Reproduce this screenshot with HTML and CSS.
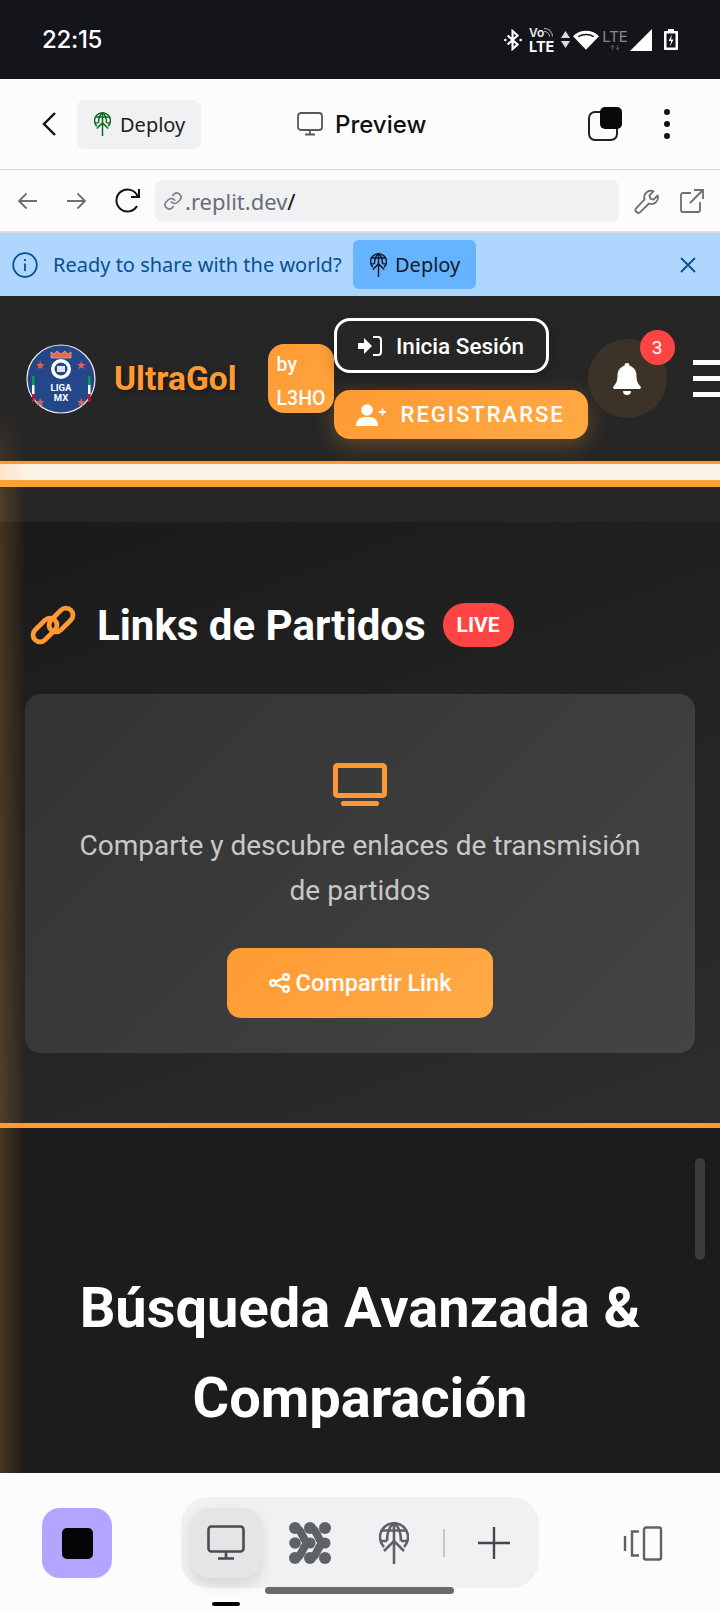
FILE: index.html
```html
<!DOCTYPE html>
<html lang="en">
<head>
    <meta charset="UTF-8">
    <meta name="viewport" content="width=device-width, initial-scale=1.0">
    <title>UltraGol Preview</title>
    <link rel="stylesheet" href="styles.css">
</head>
<body>
    <svg class="defs" width="0" height="0">
        <symbol id="globe-up" viewBox="0 0 30 42" fill="none" stroke="currentColor" stroke-width="2.600">
            <path d="M5 25A14 14 0 1 1 25 25"/>
            <path d="M3 8.500H27M1.500 19H8M22 19H28.500"/>
            <path d="M15 1C9.500 5 8 11 8 19M15 1c5.500 4 7 10 7 18M15 1V19"/>
            <path d="M15 42V20M5 29l10-10 10 10"/>
        </symbol>
    </svg>

    <div class="status-bar">
        <span class="clock">22:15</span>
        <div class="status-icons">
            <svg width="18" height="22" viewBox="0 0 20 24" fill="none" stroke="#fff" stroke-width="2.400"><path d="M4 7l11 10-5.500 5V2L15 7 4 17"/><circle cx="1.500" cy="12" r="1.500" fill="#fff" stroke="none"/><circle cx="18.500" cy="12" r="1.500" fill="#fff" stroke="none"/></svg>
            <div class="volte"><span class="vo">Vo<svg width="10" height="10" viewBox="0 0 10 10" fill="none" stroke="#bbb" stroke-width="1"><path d="M0 1.500a8 8 0 0 1 8.500 8M0 4.500a5 5 0 0 1 5.500 5"/></svg></span><span class="lte">LTE</span></div>
            <svg class="arrows" width="9" height="18" viewBox="0 0 9 18" fill="#ddd"><path d="M4.500 0 9 7H0zM0 10h9l-4.500 7z"/></svg>
            <svg class="wifi" width="26" height="20" viewBox="0 0 27 20" fill="#fff"><path d="M13.500 20 0 6C7.500-1.500 19.500-1.500 27 6z"/><path d="M5.500 6.500C10 3.500 17 3.500 21.500 6.500" fill="none" stroke="#14151a" stroke-width="1.600"/></svg>
            <div class="lte-dim"><span>LTE</span><i>↑↓</i></div>
            <svg width="22" height="22" viewBox="0 0 22 22" fill="#fff"><path d="M22 0v22H0z"/></svg>
            <svg class="battery" width="14" height="21" viewBox="0 0 14 21"><path d="M4 0h6v2h3a1 1 0 0 1 1 1v17a1 1 0 0 1-1 1H1a1 1 0 0 1-1-1V3a1 1 0 0 1 1-1h3z" fill="#fff"/><path d="M2.500 4.500h9v14h-9z" fill="#14151a"/><path d="M8 5.500 4.500 12H7l-1 5.500L9.500 10.500H7z" fill="#fff"/></svg>
        </div>
    </div>

    <div class="toolbar">
        <svg class="back" width="16" height="26" viewBox="0 0 16 26" fill="none" stroke="#111" stroke-width="2.400"><path d="M14 2 3 13l11 11"/></svg>
        <div class="chip"><svg class="chip-icon" width="17" height="24"><use href="#globe-up"/></svg>Deploy</div>
        <div class="title">
            <svg width="26" height="24" viewBox="0 0 26 24" fill="none" stroke="#55585e" stroke-width="1.800"><rect x="1" y="1" width="24" height="17" rx="3"/><path d="M13 18v4M8 22.500h10"/></svg>
            <span>Preview</span>
        </div>
        <svg class="tabs" width="36" height="36" viewBox="0 0 36 36"><rect x="2" y="6" width="28" height="28" rx="6" fill="none" stroke="#222" stroke-width="2"/><rect x="13" y="1" width="22" height="22" rx="5" fill="#0a0a0c"/></svg>
        <svg class="kebab" width="8" height="32" viewBox="0 0 8 32" fill="#111"><circle cx="4" cy="4" r="3"/><circle cx="4" cy="16" r="3"/><circle cx="4" cy="28" r="3"/></svg>
    </div>

    <div class="addressbar">
        <svg width="22" height="18" viewBox="0 0 22 18" fill="none" stroke="#6b6f76" stroke-width="1.800"><path d="M20 9H2M9.500 1.500 2 9l7.500 7.500"/></svg>
        <svg class="forward" width="22" height="18" viewBox="0 0 22 18" fill="none" stroke="#6b6f76" stroke-width="1.800"><path d="M2 9h18M12.500 1.500 20 9l-7.500 7.500"/></svg>
        <svg class="reload" width="28" height="26" viewBox="0 0 28 26" fill="none" stroke="#111" stroke-width="2"><path d="M23 18a11 11 0 1 1 .5-10"/><path d="M25 1v8h-8"/></svg>
        <div class="url">
            <svg width="20" height="20" viewBox="0 0 24 24" fill="none" stroke="#7a7e85" stroke-width="2" stroke-linecap="round"><path d="M10 13a5 5 0 0 0 7.500.5l3-3a5 5 0 0 0-7-7l-1.700 1.700"/><path d="M14 11a5 5 0 0 0-7.500-.5l-3 3a5 5 0 0 0 7 7l1.700-1.700"/></svg>
            <span>.replit.dev<b>/</b></span>
        </div>
        <svg class="wrench" width="26" height="26" viewBox="0 0 24 24" fill="none" stroke="#6b6f76" stroke-width="1.700" stroke-linejoin="round"><path d="M15 2.500a6 6 0 0 1 3 .6l-3.800 3.800.9 2.900 2.900.9 3.800-3.800a6 6 0 0 1-8 7.400L6 22a2.500 2.500 0 0 1-3.900-3.500l7.700-8A6 6 0 0 1 15 2.500z"/></svg>
        <svg class="external" width="24" height="24" viewBox="0 0 24 24" fill="none" stroke="#6b6f76" stroke-width="1.800"><path d="M11 4H3a2 2 0 0 0-2 2v15a2 2 0 0 0 2 2h15a2 2 0 0 0 2-2v-8"/><path d="M10 14 23 1M14 1h9v9"/></svg>
    </div>

    <div class="banner">
        <svg width="26" height="26" viewBox="0 0 26 26" fill="none" stroke="#0a4f92" stroke-width="1.800"><circle cx="13" cy="13" r="11.800"/><path d="M13 11.500V19M13 7v2"/></svg>
        <span class="banner-text">Ready to share with the world?</span>
        <div class="banner-deploy"><svg width="17" height="24"><use href="#globe-up"/></svg>Deploy</div>
        <svg class="banner-close" width="18" height="18" viewBox="0 0 18 18" fill="none" stroke="#0a4f92" stroke-width="1.800"><path d="M2 2l14 14M16 2 2 16"/></svg>
    </div>

    <div class="webview">
        <header class="site-header">
            <svg class="logo" width="70" height="70" viewBox="0 0 70 70">
                <circle cx="35" cy="35" r="34" fill="#24478a" stroke="#eee" stroke-width="1.200"/>
                <path d="M25 14V8l3 2 3-3 4 3 4-3 3 3 3-2v6z" fill="#e9694d" stroke="#f3b7a5" stroke-width=".6"/>
                <circle cx="35" cy="25" r="10" fill="#fff"/>
                <circle cx="35" cy="25" r="6.500" fill="#24478a"/>
                <rect x="31" y="22" width="8" height="6" fill="#dfe6f3"/>
                <g fill="#e9604a" font-family="Liberation Sans" font-size="11">
                    <text x="14" y="25" text-anchor="middle">★</text>
                    <text x="55" y="25" text-anchor="middle">★</text>
                    <text x="14" y="62" text-anchor="middle">★</text>
                    <text x="55" y="62" text-anchor="middle">★</text>
                </g>
                <rect x="6" y="32" width="2.500" height="9" fill="#0a9a4a"/><rect x="6" y="41" width="2.500" height="9" fill="#fff"/><rect x="6" y="50" width="2.500" height="8" fill="#c8102e"/>
                <rect x="62" y="32" width="2.500" height="9" fill="#0a9a4a"/><rect x="62" y="41" width="2.500" height="9" fill="#fff"/><rect x="62" y="50" width="2.500" height="8" fill="#c8102e"/>
                <text x="35" y="47" class="logo-text" text-anchor="middle">LIGA</text>
                <text x="35" y="57" class="logo-text" text-anchor="middle">MX</text>
            </svg>
            <span class="brand">UltraGol</span>
            <span class="by-badge">by L3HO</span>
            <div class="auth">
                <a class="btn-login">
                    <svg width="24" height="20" viewBox="0 0 24 20" fill="#fff"><path d="M0 7h6V2l8 8-8 8v-5H0z"/><path d="M15 1h5a3 3 0 0 1 3 3v12a3 3 0 0 1-3 3h-5" fill="none" stroke="#fff" stroke-width="2"/></svg>
                    Inicia Sesión
                </a>
                <a class="btn-register">
                    <svg width="30" height="22" viewBox="0 0 30 22" fill="#fff"><circle cx="11" cy="6" r="5.800"/><path d="M0 22c0-6 4-9 8-9h6c4 0 8 3 8 9z"/><path d="M23 8h7M26.500 4.500v7" stroke="#fff" stroke-width="1.800"/></svg>
                    REGISTRARSE
                </a>
            </div>
            <div class="bell">
                <svg width="28" height="32" viewBox="0 0 28 32" fill="#fff"><path d="M14 0a2.500 2.500 0 0 1 2.500 2.800C21 4 23.500 8 23.500 12.500c0 6 1.500 8 4 11a1.500 1.500 0 0 1-1 2.500h-25a1.500 1.500 0 0 1-1-2.500c2.500-3 4-5 4-11C4.500 8 7 4 11.500 2.800A2.500 2.500 0 0 1 14 0z"/><path d="M10 28h8a4 4 0 0 1-8 0z"/></svg>
                <span class="bell-count">3</span>
            </div>
            <div class="burger"><i></i><i></i><i></i></div>
        </header>
        <div class="stripe"></div>
        <div class="strip-gap"></div>

        <section class="links">
            <div class="section-title">
                <svg width="50" height="40" viewBox="0 0 50 40" fill="none" stroke="#ff9a33" stroke-width="4.800"><rect x="3" y="18" width="28" height="14" rx="7" transform="rotate(-45 17 25)"/><rect x="19" y="8" width="28" height="14" rx="7" transform="rotate(-45 33 15)"/></svg>
                <h2>Links de Partidos</h2>
                <span class="live">LIVE</span>
            </div>
            <div class="card">
                <svg width="54" height="43" viewBox="0 0 54 43" fill="none"><rect x="2.500" y="2.500" width="49" height="30" rx="2" stroke="#ff9a33" stroke-width="5"/><rect x="8" y="38" width="38" height="5" rx="2.500" fill="#ff9a33"/></svg>
                <p>Comparte y descubre enlaces de transmisión de partidos</p>
                <a class="btn-share">
                    <svg width="21" height="20" viewBox="0 0 21 20" fill="none" stroke="#fff" stroke-width="2.400"><circle cx="4" cy="10" r="2.800"/><circle cx="17" cy="4" r="2.800"/><circle cx="17" cy="16" r="2.800"/><path d="M6.500 8.800 14.500 5M6.500 11.200l8 3.800"/></svg>
                    Compartir Link
                </a>
            </div>
        </section>

        <section class="search">
            <h2>Búsqueda Avanzada &amp; Comparación</h2>
        </section>

        <!-- overlays on the page -->
        <div class="side-glow"></div>
        <div class="scrollbar"></div>
    </div>

    <nav class="bottom-bar">
        <div class="stop"><i></i></div>
        <div class="pill">
            <div class="pill-tab active">
                <svg width="38" height="35" viewBox="0 0 38 35" fill="none" stroke="#4a4c52" stroke-width="2.600"><rect x="1.500" y="1.500" width="35" height="25" rx="3"/><path d="M19 27v6M11 33.500h16"/></svg>
            </div>
            <div class="pill-tab">
                <svg width="42" height="42" viewBox="0 0 42 42" fill="#5f6168">
                    <circle cx="36" cy="6" r="6"/><circle cx="6" cy="21" r="5.800"/><circle cx="36" cy="36" r="6"/>
                    <circle cx="6" cy="6" r="6"/><circle cx="6" cy="36" r="6"/><circle cx="21" cy="6" r="6"/><circle cx="21" cy="36" r="6"/><circle cx="21" cy="21" r="5.500"/><circle cx="36" cy="21" r="5.500"/>
                    <path d="M6 6C14 6 13 21 21 21 13 21 14 36 6 36M21 6C29 6 28 21 36 21 28 21 29 36 21 36" fill="none" stroke="#5f6168" stroke-width="8"/>
                </svg>
            </div>
            <div class="pill-tab">
                <svg width="30" height="42" color="#5f6168"><use href="#globe-up"/></svg>
            </div>
            <span class="pill-sep"></span>
            <svg class="pill-plus" width="32" height="32" viewBox="0 0 32 32" stroke="#44464c" stroke-width="2.400"><path d="M0 16h32M16 0v32"/></svg>
        </div>
        <svg class="devices" width="40" height="35" viewBox="0 0 40 35" fill="none" stroke="#5f6168" stroke-width="2.400"><rect x="21" y="1.500" width="17" height="32" rx="2"/><path d="M16 5.500H9v24h7M2 10v15"/></svg>
        <span class="home-bar"></span>
        <span class="tab-dash"></span>
    </nav>
</body>
</html>
```

FILE: styles.css
```css
* {
    box-sizing: border-box;
}
html, body {
    margin: 0;
    padding: 0;
}
body {
    width: 720px;
    height: 1612px;
    overflow: hidden;
    display: flex;
    flex-direction: column;
    background-color: #fcfcfc;
    font-family: "Noto Sans", sans-serif;
}
.defs {
    position: absolute;
}

/* phone status bar */
.status-bar {
    height: 79px;
    flex-shrink: 0;
    display: flex;
    align-items: center;
    justify-content: space-between;
    padding: 0 42px 0 42px;
    background-color: #14151a;
    color: #fff;
}
.clock {
    font-family: Inter, sans-serif;
    font-size: 24px;
    font-weight: 500;
    letter-spacing: -0.3px;
}
.status-icons {
    display: flex;
    align-items: center;
    gap: 4px;
}
.volte {
    width: 27px;
    display: flex;
    flex-direction: column;
    font-family: Inter, sans-serif;
    font-weight: 700;
    line-height: 14px;
    margin-left: 3px;
}
.vo {
    font-size: 12px;
    font-weight: 600;
    color: #eee;
    white-space: nowrap;
}
.lte {
    font-size: 14.500px;
}
.arrows {
    margin-left: 1px;
}
.wifi {
    margin-left: -1px;
}
.lte-dim {
    width: 22px;
    display: flex;
    flex-direction: column;
    align-items: center;
    font-family: Inter, sans-serif;
    color: #8a8b90;
    line-height: 15px;
    font-size: 15px;
    margin-left: 1px;
}
.lte-dim i {
    font-size: 6px;
    line-height: 7px;
    font-style: normal;
}
.battery {
    margin-left: 8px;
}

/* replit toolbar */
.toolbar {
    height: 91px;
    flex-shrink: 0;
    display: flex;
    align-items: center;
    padding-left: 41px;
    background-color: #fcfcfc;
    border-bottom: 1px solid #d8d8da;
}
.chip {
    width: 124px;
    height: 49px;
    margin-left: 20px;
    display: flex;
    align-items: center;
    gap: 9px;
    padding-left: 17px;
    background-color: #f0f1f2;
    border-radius: 8px;
    font-size: 20px;
    color: #1c1d20;
}
.chip-icon {
    color: #0a6b1f;
}
.title {
    display: flex;
    align-items: center;
    gap: 12px;
    margin-left: 96px;
    font-family: Inter, sans-serif;
    font-size: 24px;
    font-weight: 500;
    color: #111;
}
.tabs {
    margin-left: 161px;
}
.kebab {
    margin-left: 40px;
}

/* address bar */
.addressbar {
    height: 63px;
    flex-shrink: 0;
    display: flex;
    align-items: center;
    padding-left: 17px;
    background-color: #fcfcfc;
    border-bottom: 2px solid #dcdcde;
}
.forward {
    margin-left: 26px;
}
.reload {
    margin-left: 27px;
}
.url {
    width: 464px;
    height: 42px;
    margin-left: 13px;
    display: flex;
    align-items: center;
    gap: 2px;
    padding-left: 8px;
    background-color: #f0f1f2;
    border-radius: 8px;
    font-size: 22px;
    color: #6a6e75;
}
.url b {
    font-weight: 400;
    color: #111;
}
.wrench {
    margin-left: 15px;
}
.external {
    margin-left: 20px;
}

/* deploy banner */
.banner {
    height: 63px;
    flex-shrink: 0;
    display: flex;
    align-items: center;
    padding-left: 12px;
    background-color: #aed6ff;
}
.banner-text {
    margin-left: 15px;
    width: 300px;
    font-size: 20px;
    color: #0a4f92;
    white-space: nowrap;
}
.banner-deploy {
    width: 123px;
    height: 49px;
    display: flex;
    align-items: center;
    gap: 8px;
    padding-left: 17px;
    background-color: #66b3ff;
    border-radius: 6px;
    font-size: 20px;
    color: #0f1b2a;
}
.banner-close {
    margin-left: 203px;
}

/* the page in the preview */
.webview {
    position: relative;
    flex: 1;
    min-height: 0;
    overflow: hidden;
    font-family: Roboto, sans-serif;
    color: #fff;
    background-color: #1c1c1c;
}
.site-header {
    height: 165px;
    display: flex;
    align-items: center;
    padding-left: 26px;
    background-color: #262626;
}
.logo {
    flex-shrink: 0;
}
.logo-text {
    font-family: Roboto, sans-serif;
    font-size: 9.500px;
    font-weight: 700;
    fill: #fff;
}
.brand {
    margin-left: 18px;
    font-size: 33.500px;
    font-weight: 700;
    color: #ff9a33;
    text-shadow: 2px 2px 4px rgba(0, 0, 0, 0.35);
}
.by-badge {
    width: 66px;
    height: 69px;
    margin-left: 31px;
    flex-shrink: 0;
    padding: 4px 0 0 9px;
    font-size: 19.500px;
    line-height: 34px;
    font-weight: 500;
    background: linear-gradient(135deg, #ff9a33, #ffa53f);
    border-radius: 16px;
}
.auth {
    flex-shrink: 0;
    display: flex;
    flex-direction: column;
    align-items: flex-start;
    gap: 17px;
}
.btn-login {
    width: 215px;
    height: 55px;
    display: flex;
    align-items: center;
    justify-content: center;
    gap: 14px;
    border: 3px solid #fff;
    border-radius: 16px;
    font-size: 22.500px;
    font-weight: 500;
    background-color: #262626;
    box-shadow: 0 4px 14px rgba(0, 0, 0, 0.25);
}
.btn-register {
    width: 254px;
    height: 49px;
    display: flex;
    align-items: center;
    gap: 15px;
    padding-left: 22px;
    border-radius: 16px;
    font-size: 22px;
    font-weight: 500;
    letter-spacing: 2px;
    background: linear-gradient(135deg, #ff9a33, #ffaa44);
    box-shadow: 0 6px 22px rgba(255, 154, 51, 0.3);
}
.bell {
    position: relative;
    width: 79px;
    height: 79px;
    flex-shrink: 0;
    display: flex;
    align-items: center;
    justify-content: center;
    border-radius: 50%;
    background-color: #3d3227;
}
.bell-count {
    position: absolute;
    top: -9px;
    right: -8px;
    width: 35px;
    height: 35px;
    display: flex;
    align-items: center;
    justify-content: center;
    border-radius: 50%;
    background-color: #ff4444;
    font-size: 19px;
}
.burger {
    margin-left: 26px;
    flex-shrink: 0;
    display: flex;
    flex-direction: column;
    gap: 11px;
}
.burger i {
    display: block;
    width: 30px;
    height: 5px;
    background-color: #fff;
}
.stripe {
    height: 26px;
    border-top: 3px solid #ff9a33;
    border-bottom: 7px solid #ffa038;
    background-color: #fdf2e6;
}
.strip-gap {
    height: 35px;
    background-color: #262626;
}
.links {
    height: 606px;
    padding: 81px 25px 0;
    background: linear-gradient(160deg, #1a1a1a, #2d2d2d);
    border-bottom: 5px solid #ff9a33;
}
.section-title {
    height: 44px;
    display: flex;
    align-items: center;
    padding-left: 3px;
}
.section-title h2 {
    margin: 0 17px 0 19px;
    font-size: 42px;
    font-weight: 700;
    white-space: nowrap;
}
.live {
    width: 71px;
    height: 44px;
    display: flex;
    align-items: center;
    justify-content: center;
    border-radius: 22px;
    background-color: #ff4444;
    font-size: 21px;
    font-weight: 700;
}
.card {
    height: 359px;
    margin-top: 47px;
    display: flex;
    flex-direction: column;
    align-items: center;
    padding: 69px 48px 0;
    border-radius: 16px;
    background: linear-gradient(135deg, #333333, #444444);
}
.card p {
    margin: 17px 0 0;
    font-size: 28px;
    line-height: 45px;
    text-align: center;
    color: #c8c8c8;
}
.btn-share {
    width: 266px;
    height: 70px;
    margin-top: 35px;
    display: flex;
    align-items: center;
    justify-content: center;
    gap: 6px;
    border-radius: 14px;
    font-size: 23.500px;
    font-weight: 500;
    background: linear-gradient(135deg, #ff9a33, #ffaa44);
}
.search {
    padding: 135px 50px 0;
    background-color: #1c1c1c;
}
.search h2 {
    margin: 0;
    font-size: 56px;
    line-height: 90px;
    font-weight: 700;
    text-align: center;
}
.side-glow {
    position: absolute;
    left: 0;
    top: 110px;
    bottom: 0;
    width: 26px;
    background: linear-gradient(to right, rgba(255, 154, 51, 0.2), rgba(255, 154, 51, 0));
    -webkit-mask-image: linear-gradient(to bottom, transparent, #000 90px);
    mask-image: linear-gradient(to bottom, transparent, #000 90px);
}
.scrollbar {
    position: absolute;
    left: 695px;
    top: 862px;
    width: 10px;
    height: 102px;
    border-radius: 5px;
    background-color: #3c3c3c;
}

/* bottom navigation */
.bottom-bar {
    position: relative;
    height: 139px;
    flex-shrink: 0;
    display: flex;
    align-items: flex-start;
    padding: 24px 0 0 42px;
    background-color: #fcfcfc;
}
.stop {
    width: 70px;
    height: 70px;
    margin-top: 11px;
    display: flex;
    align-items: center;
    justify-content: center;
    border-radius: 18px;
    background-color: #b3a5ff;
}
.stop i {
    display: block;
    width: 31px;
    height: 31px;
    border-radius: 5px;
    background-color: #050507;
}
.pill {
    width: 358px;
    height: 91px;
    margin-left: 69px;
    display: flex;
    align-items: center;
    padding-left: 10px;
    border-radius: 28px;
    background-color: #f0f1f3;
}
.pill-tab {
    width: 70px;
    height: 70px;
    margin-right: 14px;
    display: flex;
    align-items: center;
    justify-content: center;
    border-radius: 18px;
}
.pill-tab.active {
    background-color: #e4e5e7;
    box-shadow: 0 6px 14px rgba(0, 0, 0, 0.12);
}
.pill-sep {
    width: 2px;
    height: 28px;
    background-color: #c5c6c9;
}
.pill-plus {
    margin-left: 33px;
}
.devices {
    margin: 29px 0 0 84px;
}
.home-bar {
    position: absolute;
    left: 265px;
    top: 114px;
    width: 189px;
    height: 7px;
    border-radius: 4px;
    background-color: #6b6b6b;
}
.tab-dash {
    position: absolute;
    left: 212px;
    top: 129px;
    width: 28px;
    height: 4px;
    border-radius: 2px;
    background-color: #000;
}
```
